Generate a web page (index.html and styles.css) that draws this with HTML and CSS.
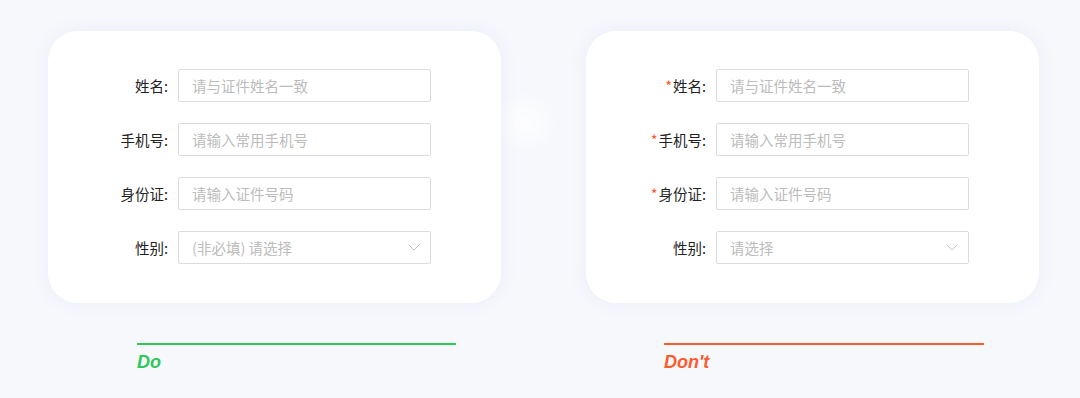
FILE: index.html
```html
<!DOCTYPE html>
<html lang="zh-CN">

<head>
  <meta charset="UTF-8" />
  <title>表单必填项示例</title>
  <link rel="stylesheet" href="styles.css">
</head>

<body>
  <div class="board">
    <div class="panel">
      <form class="card">
        <div class="row">
          <label class="label">姓名:</label>
          <input class="field" type="text" placeholder="请与证件姓名一致" />
        </div>
        <div class="row">
          <label class="label">手机号:</label>
          <input class="field" type="text" placeholder="请输入常用手机号" />
        </div>
        <div class="row">
          <label class="label">身份证:</label>
          <input class="field" type="text" placeholder="请输入证件号码" />
        </div>
        <div class="row">
          <label class="label">性别:</label>
          <div class="field select">
            <span class="placeholder">(非必填) 请选择</span>
            <svg class="arrow" width="12" height="7" viewBox="0 0 12 7"><polyline points="0.5,0.5 6,6 11.5,0.5" /></svg>
          </div>
        </div>
      </form>
      <div class="caption do">
        <div class="rule"></div>
        <p class="verdict">Do</p>
      </div>
    </div>

    <div class="panel">
      <form class="card">
        <div class="row">
          <label class="label"><span class="star">*</span>姓名:</label>
          <input class="field" type="text" placeholder="请与证件姓名一致" />
        </div>
        <div class="row">
          <label class="label"><span class="star">*</span>手机号:</label>
          <input class="field" type="text" placeholder="请输入常用手机号" />
        </div>
        <div class="row">
          <label class="label"><span class="star">*</span>身份证:</label>
          <input class="field" type="text" placeholder="请输入证件号码" />
        </div>
        <div class="row">
          <label class="label">性别:</label>
          <div class="field select">
            <span class="placeholder">请选择</span>
            <svg class="arrow" width="12" height="7" viewBox="0 0 12 7"><polyline points="0.5,0.5 6,6 11.5,0.5" /></svg>
          </div>
        </div>
      </form>
      <div class="caption dont">
        <div class="rule"></div>
        <p class="verdict">Don't</p>
      </div>
    </div>
  </div>
</body>

</html>
```

FILE: styles.css
```css
html, body {
  margin: 0;
  height: 100%;
}

body {
  font-family: "Noto Sans CJK SC", "Noto Sans", sans-serif;
  background: radial-gradient(circle at 526px 122px, rgba(255, 255, 255, 0.8) 0, rgba(255, 255, 255, 0) 32px), #f7f8fc;
  overflow: hidden;
}

.board {
  display: flex;
  gap: 85px;
  padding: 31px 0 0 48px;
}

.panel {
  width: 453px;
  display: flex;
  flex-direction: column;
}

.card {
  margin: 0;
  background: #fff;
  border-radius: 30px;
  box-shadow: 0 0 18px rgba(95, 115, 235, 0.08);
  padding: 38px 70px 39px 0;
  display: flex;
  flex-direction: column;
  gap: 21px;
}

.row {
  display: grid;
  grid-template-columns: 120px 253px;
  column-gap: 10px;
  align-items: center;
}

.label {
  text-align: right;
  font-size: 14.5px;
  color: #222;
  line-height: 20px;
}

.star {
  color: #ff5a2c;
  margin-right: 1px;
}

.field {
  box-sizing: border-box;
  height: 33px;
  width: 100%;
  margin: 0;
  padding: 0 13px;
  border: 1px solid #dcdcdc;
  border-radius: 2px;
  font-family: inherit;
  font-size: 14.5px;
  color: #333;
  background: #fff;
  outline: none;
}

.field::placeholder {
  color: #bcbcbc;
}

.select {
  display: flex;
  align-items: center;
  justify-content: space-between;
  padding-right: 10px;
}

.placeholder {
  color: #bcbcbc;
}

.arrow polyline {
  fill: none;
  stroke: #c4c4c4;
  stroke-width: 1;
}

.caption {
  margin-top: 40px;
  width: 319px;
}

.caption.do {
  margin-left: 89px;
  color: #2fc75a;
}

.caption.dont {
  margin-left: 78px;
  width: 320px;
  color: #ff5a2c;
}

.rule {
  height: 2px;
  background: currentColor;
}

.verdict {
  margin: 7px 0 0;
  font-family: "Liberation Sans", Arial, sans-serif;
  font-size: 18px;
  font-weight: bold;
  font-style: italic;
  line-height: 20px;
}
```
